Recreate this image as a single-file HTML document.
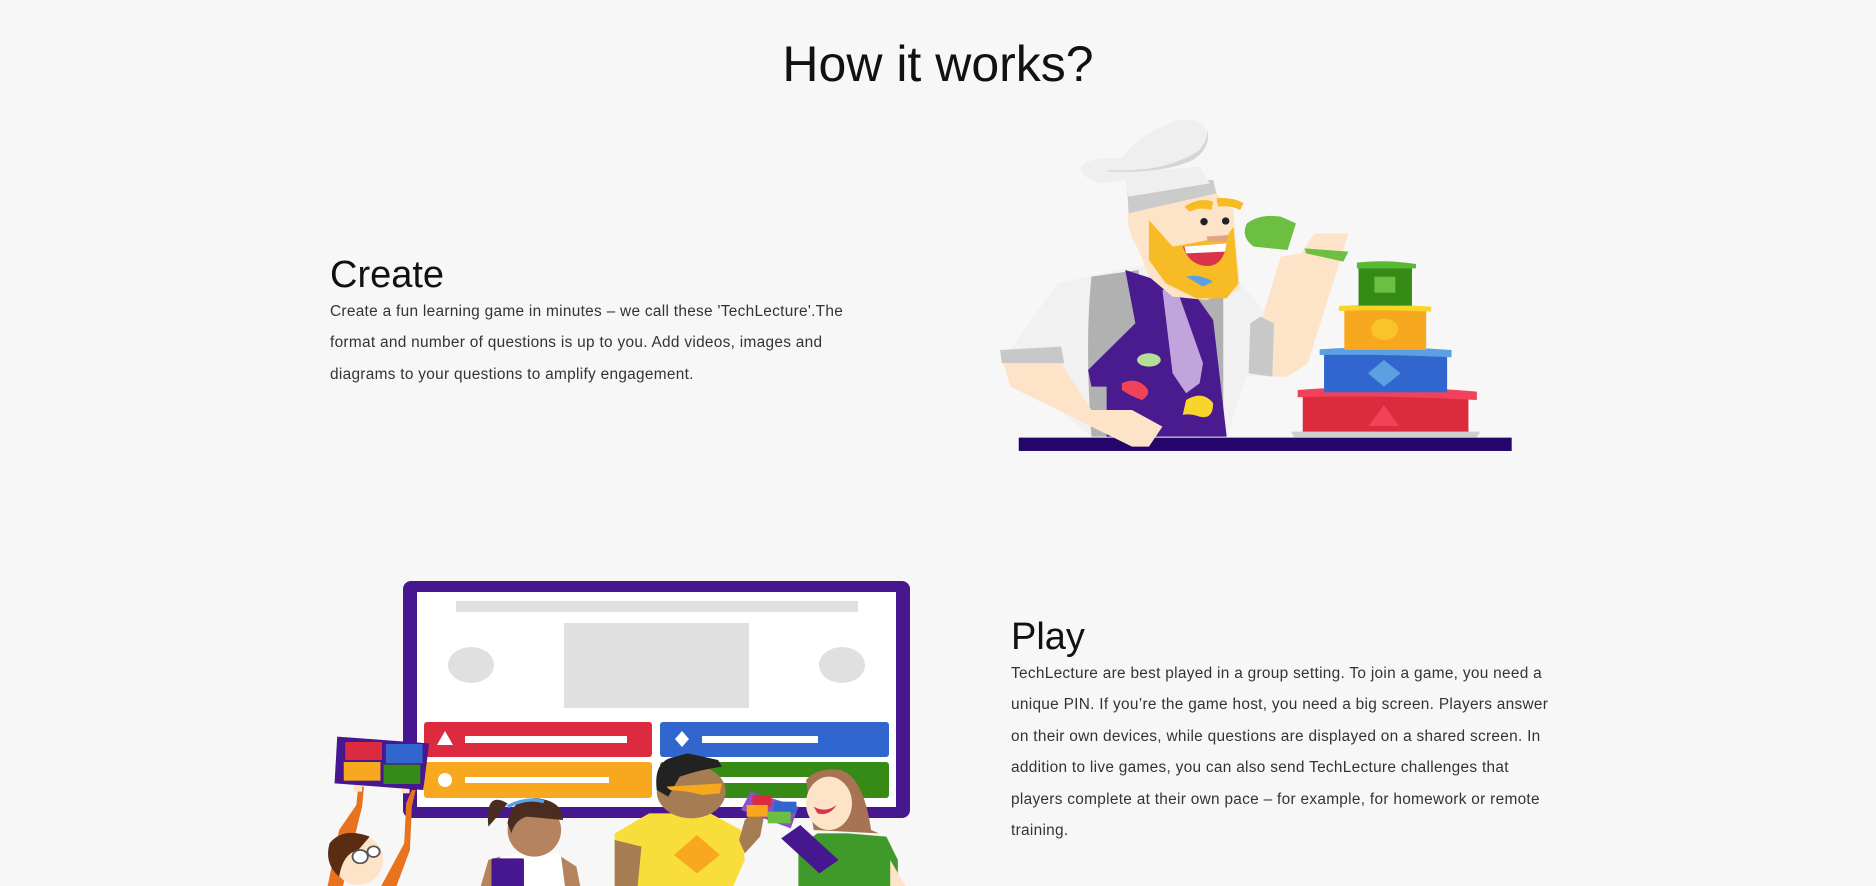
<!DOCTYPE html>
<html><head><meta charset="utf-8"><style>
html,body{margin:0;padding:0;background:#f7f7f7;}
body{width:1876px;height:886px;position:relative;overflow:hidden;font-family:"Liberation Sans",sans-serif;color:#111;}
.t{position:absolute;white-space:nowrap;}
h1,h2{margin:0;font-weight:400;}
.p{font-size:15.4px;line-height:31.4px;color:#333;letter-spacing:0.3px;}
svg{position:absolute;left:0;top:0;}
</style></head><body>
<svg width="1876" height="886" viewBox="0 0 1876 886">
<g transform="translate(990,110) scale(0.3381,0.3333)">
 <rect x="85" y="983" width="1458" height="40" fill="#24066b"/>
 <polygon points="890,965 1450,965 1440,982 900,982" fill="#cfcfcf"/>
 <rect x="925" y="850" width="490" height="115" fill="#dc2a3e"/>
 <path d="M910,840 Q1170,820 1440,845 L1440,870 Q1170,855 910,862Z" fill="#f2425a"/>
 <polygon points="1165,885 1210,948 1120,948" fill="#f2425a"/>
 <rect x="988" y="725" width="364" height="122" fill="#3166ce"/>
 <path d="M975,718 Q1170,705 1365,720 L1365,742 Q1170,732 975,735Z" fill="#5ba0e3"/>
 <polygon points="1165,750 1215,790 1165,830 1118,790" fill="#5ba0e3"/>
 <rect x="1048" y="595" width="242" height="125" fill="#f8a81e"/>
 <path d="M1032,588 Q1170,580 1305,590 L1305,605 Q1170,598 1032,603Z" fill="#f8d52a"/>
 <ellipse cx="1167" cy="658" rx="40" ry="32" fill="#f8c42a"/>
 <rect x="1090" y="465" width="158" height="122" fill="#358b16"/>
 <path d="M1085,458 Q1170,448 1260,462 L1260,475 L1085,475Z" fill="#5ab933"/>
 <rect x="1137" y="500" width="62" height="48" fill="#6cbf40"/>
 <path d="M30,760 L200,520 L420,470 L700,470 L840,640 L840,800 L760,800 L700,980 L300,980 L40,760Z" fill="#f1f1f1"/>
 <path d="M300,500 L440,480 L440,980 L300,980 Q280,700 300,500Z" fill="#b1b1b1"/>
 <path d="M600,520 L690,560 L690,980 L620,980Z" fill="#b1b1b1"/>
 <path d="M30,720 L210,710 L220,760 L35,760Z" fill="#c8c8c8"/>
 <path d="M400,480 L430,640 L290,780 L300,830 L345,830 L345,980 L700,980 L660,630 L600,545 Z" fill="#4a1a8f"/>
 <path d="M510,540 L550,530 L630,760 L620,820 L580,850 L540,790Z" fill="#c1a4dc"/>
 <ellipse cx="470" cy="750" rx="35" ry="20" fill="#b2de98"/>
 <path d="M390,820 Q430,800 460,830 Q480,850 450,870 Q420,860 390,840Z" fill="#f2425a"/>
 <path d="M580,870 Q630,840 660,880 Q660,930 620,920 Q590,910 570,915Z" fill="#f8d52a"/>
 <path d="M40,760 L210,760 L300,900 L420,900 L510,950 L470,1010 L420,1010 L60,830Z" fill="#fde4c8"/>
 <path d="M410,300 L660,240 L720,300 L740,540 L640,570 L540,560 L470,500 L440,420 Q400,360 410,300Z" fill="#fde4c8"/>
 <path d="M470,330 L540,410 L700,380 L720,350 L735,520 L700,565 L610,565 L520,520 L470,450Z" fill="#f7bb26"/>
 <path d="M570,410 Q640,405 700,400 Q690,470 640,468 Q590,465 570,410Z" fill="#d9344a"/>
 <path d="M575,410 L700,400 L695,425 L580,430Z" fill="#fff"/>
 <path d="M580,500 Q620,490 660,515 L630,530Z" fill="#5ba0e3"/>
 <circle cx="633" cy="335" r="11" fill="#222"/><circle cx="697" cy="333" r="11" fill="#222"/>
 <path d="M640,380 L705,375 L700,395 L645,395Z" fill="#e3a381"/>
 <path d="M575,290 Q620,260 660,275 L655,300 Q620,290 590,305Z" fill="#f7bb26"/>
 <path d="M670,265 Q720,260 750,280 L740,300 Q710,285 675,290Z" fill="#f7bb26"/>
 <path d="M405,220 L660,210 L670,250 L410,310Z" fill="#cbcbcb"/>
 <path d="M400,210 L330,220 Q260,200 270,170 Q290,140 390,145 Q450,60 560,30 Q650,20 640,90 Q610,160 500,180 L620,170 L650,220 L410,260Z" fill="#efefef"/>
 <path d="M350,180 Q520,190 620,120 Q650,80 640,50 Q660,110 600,150 Q520,190 350,185Z" fill="#d5d5d5"/>
 <path d="M800,640 L860,440 L920,430 L960,370 L1060,370 L1030,470 L940,760 L880,800 L830,800Z" fill="#fde4c8"/>
 <path d="M770,640 L800,620 L840,640 L835,800 L765,790Z" fill="#c8c8c8"/>
 <path d="M760,340 Q800,310 860,320 L905,340 L880,420 L780,410 Q740,380 760,340Z" fill="#6cbf40"/>
 <path d="M930,415 L1060,425 L1045,455 L935,430Z" fill="#6cbf40"/>
</g>
<rect x="403" y="581" width="507" height="237" rx="8" fill="#46178f"/>
<rect x="417" y="592" width="479" height="215" fill="#fff"/>
<rect x="456" y="601" width="402" height="11" fill="#e0e0e0"/>
<rect x="564" y="623" width="185" height="85" fill="#e0e0e0"/>
<ellipse cx="471" cy="665" rx="23" ry="18" fill="#e0e0e0"/>
<ellipse cx="842" cy="665" rx="23" ry="18" fill="#e0e0e0"/>
<rect x="424" y="722" width="228" height="35" rx="3" fill="#dc2a3e"/>
<rect x="660" y="722" width="229" height="35" rx="3" fill="#3166ce"/>
<rect x="424" y="762" width="228" height="36" rx="3" fill="#f8a81e"/>
<rect x="660" y="762" width="229" height="36" rx="3" fill="#358b16"/>
<polygon points="445,731 453,745 437,745" fill="#fff"/>
<rect x="465" y="736" width="162" height="7" fill="#fff"/>
<polygon points="682,731 689,739 682,747 675,739" fill="#fff"/>
<rect x="702" y="736" width="116" height="7" fill="#fff"/>
<circle cx="445" cy="780" r="7" fill="#fff"/>
<rect x="465" y="777" width="144" height="6" fill="#fff"/>
<rect x="700" y="777" width="144" height="6" fill="#fff"/>
<g transform="translate(320,720) scale(0.3827,0.3333)">
 <path d="M20,498 L50,330 L95,255 L100,200 L115,200 L110,260 L80,400 L60,498Z" fill="#e8731f"/>
 <path d="M160,498 L220,370 L225,250 L240,210 L250,210 L240,260 L235,390 L200,498Z" fill="#e8731f"/>
 <rect x="88" y="175" width="22" height="40" fill="#fde4c8"/><rect x="212" y="180" width="22" height="40" fill="#fde4c8"/>
 <path d="M45,50 L285,70 L270,210 L38,190Z" fill="#46178f"/>
 <rect x="66" y="66" width="96" height="54" fill="#dc2a3e"/><rect x="172" y="72" width="96" height="58" fill="#3166ce"/>
 <rect x="62" y="126" width="96" height="56" fill="#f8a81e"/><rect x="166" y="134" width="96" height="58" fill="#358b16"/>
 <ellipse cx="100" cy="420" rx="65" ry="75" fill="#fde4c8"/>
 <path d="M25,370 Q60,320 130,350 L100,390 Q60,400 50,470 Q10,430 25,370Z" fill="#5a2d12"/>
 <circle cx="105" cy="410" r="20" fill="#fff" stroke="#555" stroke-width="5"/><circle cx="140" cy="395" r="16" fill="#fff" stroke="#555" stroke-width="5"/>
 <path d="M420,498 L440,420 L520,400 L620,400 L670,440 L680,498Z" fill="#fff"/>
 <path d="M420,498 L440,420 L470,410 L470,498Z M630,410 L670,440 L680,498 L640,498Z" fill="#b5845f"/>
 <ellipse cx="560" cy="330" rx="70" ry="80" fill="#b5845f"/>
 <path d="M490,310 Q500,230 570,235 Q635,245 635,300 L540,290 Q510,300 500,340Z" fill="#4a2d20"/>
 <path d="M490,250 Q430,210 440,320 L470,280Z" fill="#4a2d20"/>
 <path d="M490,260 Q540,230 585,245" stroke="#5ba0e3" stroke-width="10" fill="none"/>
 <rect x="448" y="415" width="85" height="90" rx="4" fill="#46178f"/>
 <path d="M770,498 L770,340 L860,280 L1020,280 L1100,330 L1110,420 L1080,498Z" fill="#f9dd3b"/>
 <path d="M770,360 L770,498 L830,498 L840,380Z M1095,360 L1110,400 L1150,350 L1160,290 L1140,270 L1110,300Z" fill="#a67c52"/>
 <polygon points="985,345 1045,405 985,460 925,405" fill="#f8a81e"/>
 <ellipse cx="970" cy="215" rx="90" ry="80" fill="#a67c52"/>
 <path d="M880,210 Q870,120 930,110 L960,100 L1000,110 L1040,120 L1050,140 Q990,150 940,170 L910,230Z" fill="#222"/>
 <path d="M905,200 L1050,190 L1045,220 L1000,225 L960,215 L915,210Z" fill="#f8a81e"/>
 <path d="M1100,270 L1125,215 L1250,260 L1230,325 Z" fill="#8c52c4"/>
 <rect x="1130" y="225" width="50" height="35" fill="#dc2a3e"/><rect x="1185" y="245" width="60" height="35" fill="#3166ce"/>
 <rect x="1115" y="255" width="55" height="35" fill="#f8a81e"/><rect x="1170" y="275" width="60" height="35" fill="#6cbf40"/>
 <path d="M1270,180 Q1300,140 1360,150 Q1420,170 1440,330 L1460,340 L1290,330Z" fill="#a87352"/>
 <ellipse cx="1330" cy="250" rx="60" ry="80" fill="#fde4c8"/>
 <path d="M1290,260 Q1320,280 1350,255 Q1330,290 1300,280Z" fill="#d9344a"/>
 <path d="M1250,498 L1250,380 L1300,340 L1380,340 L1480,350 L1510,420 L1510,498Z" fill="#3f9a2a"/>
 <path d="M1205,355 L1255,315 L1355,420 L1305,460Z" fill="#46178f"/>
 <path d="M1490,420 L1530,498 L1490,498Z" fill="#fde4c8"/>
</g>
</svg>
<h1 class="t" style="left:0;width:1876px;text-align:center;top:34px;font-size:50px;line-height:60px;">How it works?</h1>
<h2 class="t" style="left:330px;top:252px;font-size:38px;line-height:46px;">Create</h2>
<div class="t p" style="left:330px;top:296px;">Create a fun learning game in minutes – we call these 'TechLecture'.The<br>format and number of questions is up to you. Add videos, images and<br>diagrams to your questions to amplify engagement.</div>
<h2 class="t" style="left:1011px;top:614px;font-size:38px;line-height:46px;">Play</h2>
<div class="t p" style="left:1011px;top:658px;">TechLecture are best played in a group setting. To join a game, you need a<br>unique PIN. If you’re the game host, you need a big screen. Players answer<br>on their own devices, while questions are displayed on a shared screen. In<br>addition to live games, you can also send TechLecture challenges that<br>players complete at their own pace – for example, for homework or remote<br>training.</div>
</body></html>
